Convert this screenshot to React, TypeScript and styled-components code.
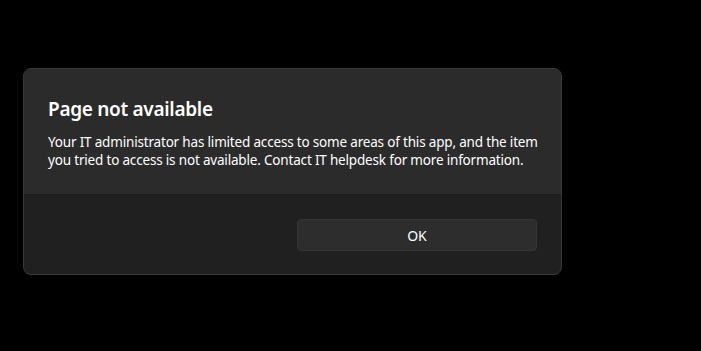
import * as React from "react";
import styled, { createGlobalStyle } from "styled-components";

const GlobalStyle = createGlobalStyle`
  html, body {
    margin: 0;
    padding: 0;
    background: #000000;
    font-family: "Noto Sans", "Open Sans", sans-serif;
  }
`;

function App() {
  return (
    <>
      <GlobalStyle />
      <Page>
        <Dialog>
          <Content>
            <Title>Page not available</Title>
            <Message>
              Your IT administrator has limited access to some areas of this
              app, and the item
              <br />
              you tried to access is not available. Contact IT helpdesk for
              more information.
            </Message>
          </Content>
          <Footer>
            <Spacer />
            <Button>OK</Button>
          </Footer>
        </Dialog>
      </Page>
    </>
  );
}

export default App;

const Page = styled.div`
  width: 701px;
  height: 351px;
  padding: 68px 0 0 23px;
  box-sizing: border-box;
  background: #000;
`;

const Dialog = styled.div`
  width: 539px;
  box-sizing: border-box;
  border: 1px solid #3a3a3a;
  border-radius: 8px;
  overflow: hidden;
  background: #202020;
`;

const Content = styled.div`
  background: #2b2b2b;
  padding: 26px 20px 21px 24px;
  height: 126px;
  box-sizing: border-box;
  border-bottom: 1px solid #1d1d1d;
`;

const Title = styled.h1`
  margin: 0 0 11px 0;
  font-size: 19px;
  letter-spacing: -0.3px;
  line-height: 28px;
  font-weight: 600;
  color: #ffffff;
`;

const Message = styled.p`
  margin: 0;
  font-size: 13.5px;
  letter-spacing: -0.18px;
  line-height: 17.5px;
  color: #ffffff;
  white-space: nowrap;
`;

const Footer = styled.div`
  display: grid;
  grid-template-columns: 1fr 240px;
  gap: 8px;
  padding: 24px 24px 23px 24px;
`;

const Spacer = styled.div``;

const Button = styled.button`
  height: 32px;
  border: 1px solid #353535;
  border-radius: 4px;
  background: #2d2d2d;
  color: #ffffff;
  font-family: "Noto Sans", "Open Sans", sans-serif;
  font-size: 14px;
  padding: 0;
`;
